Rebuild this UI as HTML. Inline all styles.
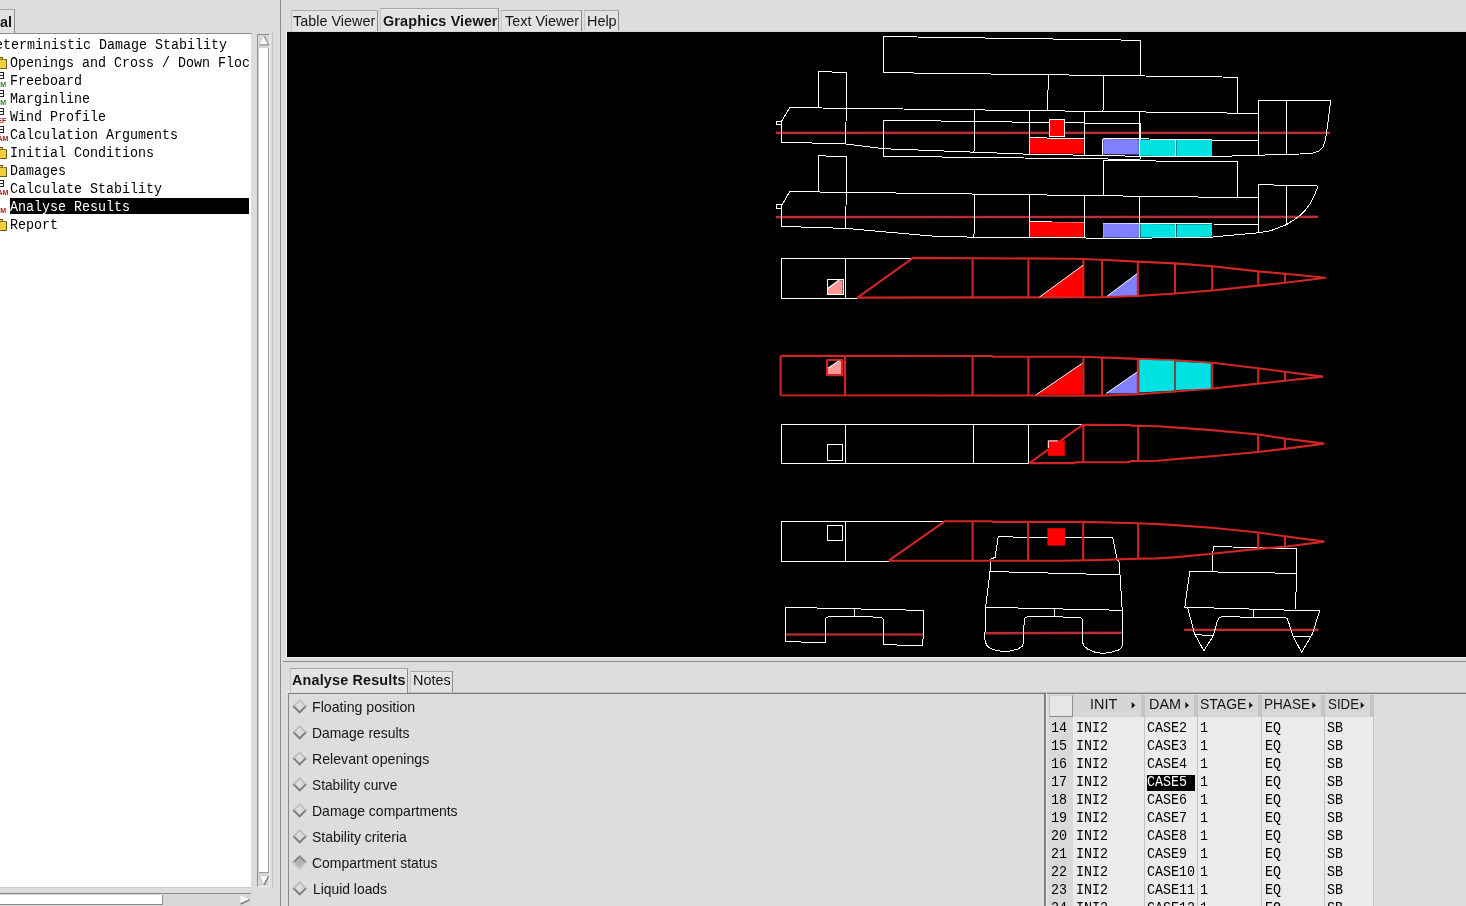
<!DOCTYPE html>
<html><head><meta charset="utf-8"><title>NAPA</title><style>
html,body{margin:0;padding:0;}
body{width:1466px;height:906px;overflow:hidden;background:#dddddd;position:relative;font-family:"Liberation Sans",sans-serif;}
.a{position:absolute;}
.mono{font-family:"Liberation Mono",monospace;font-size:14.5px;white-space:pre;color:#000;position:absolute;height:18px;line-height:18px;transform:scaleX(0.9195);transform-origin:0 0;}
.sans{font-family:"Liberation Sans",sans-serif;font-size:15px;white-space:pre;color:#151515;position:absolute;line-height:16px;height:16px;transform:scaleX(0.96);transform-origin:0 0;}
.b{font-weight:bold;}
.tab{position:absolute;box-sizing:border-box;border:1px solid #8c8c8c;border-bottom:none;border-top-color:#a8a8a8;border-left-color:#c6c6c6;background:#e3e3e3;}
</style></head><body><div id="w" style="position:absolute;left:0;top:0;width:1466px;height:906px;will-change:transform;">
<div class="a" style="left:-20px;top:9.2px;width:35px;height:23.5px;box-sizing:border-box;border:1px solid #8c8c8c;border-bottom:none;border-top-color:#a8a8a8;background:#e3e3e3;"></div>
<div class="sans b" style="left:0.4px;top:13.7px;">al</div>
<div class="a" style="left:0px;top:32.5px;width:252px;height:1.5px;background:#8c8c8c;"></div>
<div class="a" style="left:0px;top:34px;width:251.2px;height:853px;background:#ffffff;"></div>
<div class="a" style="left:0px;top:887.1px;width:251.2px;height:1.1px;background:#cacaca;"></div>
<div class="a" style="left:0;top:0;width:250px;height:906px;overflow:hidden;"><div class="mono" style="left:-13.2px;top:36px;">Deterministic Damage Stability</div></div>
<div class="a" style="left:0;top:0;width:250px;height:906px;overflow:hidden;"><div class="mono" style="left:10px;top:54px;">Openings and Cross / Down Floc</div></div>
<div class="a" style="left:-2px;top:58.5px;width:8.5px;height:10.5px;box-sizing:border-box;background:#f2cf3e;border:1px solid #6b5a10;border-top-color:#8a7a30;"></div>
<div class="a" style="left:-2px;top:57px;width:4.5px;height:2px;background:#e8c030;border-top:1px solid #6b5a10;border-right:1px solid #6b5a10;box-sizing:border-box;"></div>
<div class="a" style="left:0;top:0;width:250px;height:906px;overflow:hidden;"><div class="mono" style="left:10px;top:72px;">Freeboard</div></div>
<div class="a" style="left:-3px;top:72px;width:7px;height:7px;box-sizing:border-box;border:1px solid #222;background:#fff;"></div>
<div class="a" style="left:0px;top:74.5px;width:3px;height:1px;background:#222;"></div>
<div class="a" style="left:0.3px;top:80.7px;font:bold 7px/7px 'Liberation Sans',sans-serif;color:#2f7f33;letter-spacing:0px;">M</div>
<div class="a" style="left:0;top:0;width:250px;height:906px;overflow:hidden;"><div class="mono" style="left:10px;top:90px;">Marginline</div></div>
<div class="a" style="left:-3px;top:90px;width:7px;height:7px;box-sizing:border-box;border:1px solid #222;background:#fff;"></div>
<div class="a" style="left:0px;top:92.5px;width:3px;height:1px;background:#222;"></div>
<div class="a" style="left:0.3px;top:98.7px;font:bold 7px/7px 'Liberation Sans',sans-serif;color:#2f7f33;letter-spacing:0px;">M</div>
<div class="a" style="left:0;top:0;width:250px;height:906px;overflow:hidden;"><div class="mono" style="left:10px;top:108px;">Wind Profile</div></div>
<div class="a" style="left:-3px;top:108px;width:7px;height:7px;box-sizing:border-box;border:1px solid #222;background:#fff;"></div>
<div class="a" style="left:0px;top:110.5px;width:3px;height:1px;background:#222;"></div>
<div class="a" style="left:-2.6px;top:116.7px;font:bold 7px/7px 'Liberation Sans',sans-serif;color:#a82020;letter-spacing:0px;">EF</div>
<div class="a" style="left:0;top:0;width:250px;height:906px;overflow:hidden;"><div class="mono" style="left:10px;top:126px;">Calculation Arguments</div></div>
<div class="a" style="left:-3px;top:126px;width:7px;height:7px;box-sizing:border-box;border:1px solid #222;background:#fff;"></div>
<div class="a" style="left:0px;top:128.5px;width:3px;height:1px;background:#222;"></div>
<div class="a" style="left:-2.6px;top:134.7px;font:bold 7px/7px 'Liberation Sans',sans-serif;color:#a82020;letter-spacing:0px;">AM</div>
<div class="a" style="left:0;top:0;width:250px;height:906px;overflow:hidden;"><div class="mono" style="left:10px;top:144px;">Initial Conditions</div></div>
<div class="a" style="left:-2px;top:148.5px;width:8.5px;height:10.5px;box-sizing:border-box;background:#f2cf3e;border:1px solid #6b5a10;border-top-color:#8a7a30;"></div>
<div class="a" style="left:-2px;top:147px;width:4.5px;height:2px;background:#e8c030;border-top:1px solid #6b5a10;border-right:1px solid #6b5a10;box-sizing:border-box;"></div>
<div class="a" style="left:0;top:0;width:250px;height:906px;overflow:hidden;"><div class="mono" style="left:10px;top:162px;">Damages</div></div>
<div class="a" style="left:-2px;top:166.5px;width:8.5px;height:10.5px;box-sizing:border-box;background:#f2cf3e;border:1px solid #6b5a10;border-top-color:#8a7a30;"></div>
<div class="a" style="left:-2px;top:165px;width:4.5px;height:2px;background:#e8c030;border-top:1px solid #6b5a10;border-right:1px solid #6b5a10;box-sizing:border-box;"></div>
<div class="a" style="left:0;top:0;width:250px;height:906px;overflow:hidden;"><div class="mono" style="left:10px;top:180px;">Calculate Stability</div></div>
<div class="a" style="left:-3px;top:180px;width:7px;height:7px;box-sizing:border-box;border:1px solid #222;background:#fff;"></div>
<div class="a" style="left:0px;top:182.5px;width:3px;height:1px;background:#222;"></div>
<div class="a" style="left:-2.6px;top:188.7px;font:bold 7px/7px 'Liberation Sans',sans-serif;color:#a82020;letter-spacing:0px;">AM</div>
<div class="a" style="left:9.6px;top:198.2px;width:239.6px;height:15.6px;background:#000;"></div>
<div class="a" style="left:0;top:0;width:251px;height:906px;overflow:hidden;"><div class="mono" style="left:10px;top:198px;color:#fff;">Analyse Results</div></div>
<div class="a" style="left:0.3px;top:206.7px;font:bold 7px/7px 'Liberation Sans',sans-serif;color:#a82020;letter-spacing:0px;">M</div>
<div class="a" style="left:0;top:0;width:250px;height:906px;overflow:hidden;"><div class="mono" style="left:10px;top:216px;">Report</div></div>
<div class="a" style="left:-2px;top:220.5px;width:8.5px;height:10.5px;box-sizing:border-box;background:#f2cf3e;border:1px solid #6b5a10;border-top-color:#8a7a30;"></div>
<div class="a" style="left:-2px;top:219px;width:4.5px;height:2px;background:#e8c030;border-top:1px solid #6b5a10;border-right:1px solid #6b5a10;box-sizing:border-box;"></div>
<div class="a" style="left:257px;top:34px;width:13px;height:853px;box-sizing:border-box;background:#d6d6d6;border-left:1px solid #8c8c8c;border-top:1px solid #8c8c8c;border-right:1px solid #f2f2f2;border-bottom:1px solid #f2f2f2;"></div>
<div class="a" style="left:258.5px;top:47.5px;width:10px;height:825.5px;background:#fff;border-right:1px solid #9a9a9a;border-bottom:1px solid #9a9a9a;box-sizing:border-box;"></div>
<svg class="a" style="left:257px;top:34px" width="13" height="853" viewBox="0 0 13 853"><path d="M7.2 2.2 L2.5 10.8 L11.8 10.8 Z" fill="#fff"/><path d="M7.2 2.2 L11.8 10.8 L2.5 10.8" fill="none" stroke="#8a8a8a" stroke-width="1.2"/><path d="M2.6 842.2 L11.6 842.2 L7 851 Z" fill="#fff"/><path d="M11.6 842.2 L7 851" fill="none" stroke="#777" stroke-width="1.4"/><path d="M2.6 842.2 L7 851" fill="none" stroke="#bbb" stroke-width="0.8"/></svg>
<div class="a" style="left:0px;top:892.8px;width:251px;height:13.2px;box-sizing:border-box;background:#d8d8d8;border-top:1.6px solid #8a8a8a;"></div>
<div class="a" style="left:0px;top:894.5px;width:162.5px;height:10.6px;background:#fff;border-right:1px solid #909090;border-bottom:1.2px solid #8a8a8a;box-sizing:border-box;"></div>
<svg class="a" style="left:238px;top:893px" width="13" height="13" viewBox="0 0 13 13"><path d="M2.6 2.6 L11.8 6.6 L2.6 11 Z" fill="#fff"/><path d="M11.8 6.6 L2.6 11" fill="none" stroke="#777" stroke-width="1.4"/></svg>
<div class="a" style="left:279.8px;top:0px;width:1.3px;height:906px;background:#8e8e8e;"></div>
<div class="a" style="left:272.2px;top:32.3px;width:0.8px;height:856px;background:#c4c4c4;"></div>
<div class="tab" style="left:290.5px;top:10px;width:87.5px;height:21.5px;"></div>
<div class="sans" style="left:293.2px;top:12.8px;">Table Viewer</div>
<div class="tab" style="left:380px;top:8px;width:119px;height:24px;"></div>
<div class="sans b" style="left:383.3px;top:12.8px;letter-spacing:0.14px;">Graphics Viewer</div>
<div class="tab" style="left:501.3px;top:10px;width:80.7px;height:21.5px;"></div>
<div class="sans" style="left:504.5px;top:12.8px;">Text Viewer</div>
<div class="tab" style="left:583.6px;top:10px;width:35.4px;height:21.5px;"></div>
<div class="sans" style="left:586.7px;top:12.8px;">Help</div>
<div class="a" style="left:286.4px;top:30.9px;width:1180px;height:626.8px;box-sizing:border-box;border:1px solid #f0f0f0;border-top-color:#d4d4d4;border-right:none;background:#000;"></div>
<div class="a" style="left:287.8px;top:31.8px;width:1178.2px;height:624.1px;background:#000;"></div>
<div class="a" style="left:283px;top:660.8px;width:1183px;height:1.2px;background:#8a8a8a;"></div>
<div class="tab" style="left:290.1px;top:668.2px;width:118px;height:24.8px;"></div>
<div class="sans b" style="left:292.2px;top:672.2px;letter-spacing:0.16px;">Analyse Results</div>
<div class="tab" style="left:410.4px;top:670.6px;width:42.4px;height:22px;"></div>
<div class="sans" style="left:413.2px;top:672.2px;">Notes</div>
<div class="a" style="left:408px;top:691.6px;width:1058px;height:1px;background:#bcbcbc;"></div>
<div class="a" style="left:286.4px;top:691.2px;width:4px;height:1px;background:#f0f0f0;"></div>
<div class="a" style="left:288px;top:692.6px;width:1178px;height:1.5px;background:#7c7c7c;"></div>
<div class="a" style="left:288px;top:693px;width:1px;height:213px;background:#8a8a8a;"></div>
<div class="sans" style="left:311.7px;top:698.5px;transform:scaleX(0.9446);">Floating position</div>
<div class="sans" style="left:311.7px;top:724.5px;transform:scaleX(0.9274);">Damage results</div>
<div class="sans" style="left:311.7px;top:750.5px;transform:scaleX(0.9437);">Relevant openings</div>
<div class="sans" style="left:311.7px;top:776.5px;transform:scaleX(0.9139);">Stability curve</div>
<div class="sans" style="left:311.7px;top:802.5px;transform:scaleX(0.9341);">Damage compartments</div>
<div class="sans" style="left:311.7px;top:828.5px;transform:scaleX(0.9322);">Stability criteria</div>
<div class="sans" style="left:311.7px;top:854.5px;transform:scaleX(0.9283);">Compartment status</div>
<div class="sans" style="left:313.2px;top:880.5px;transform:scaleX(0.9245);">Liquid loads</div>
<svg class="a" style="left:0;top:0" width="1466" height="906" viewBox="0 0 1466 906"><path d="M292.3 706.3 L299.7 698.9 L307.1 706.3 Z" fill="#bebebe"/><path d="M292.3 706.3 L299.7 713.7 L307.1 706.3 Z" fill="#7c7c7c"/><path d="M295 706.3 L299.7 701.6 L304.4 706.3 L299.7 711 Z" fill="#dddddd"/><path d="M292.3 732.3 L299.7 724.9 L307.1 732.3 Z" fill="#bebebe"/><path d="M292.3 732.3 L299.7 739.7 L307.1 732.3 Z" fill="#7c7c7c"/><path d="M295 732.3 L299.7 727.6 L304.4 732.3 L299.7 737 Z" fill="#dddddd"/><path d="M292.3 758.3 L299.7 750.9 L307.1 758.3 Z" fill="#bebebe"/><path d="M292.3 758.3 L299.7 765.7 L307.1 758.3 Z" fill="#7c7c7c"/><path d="M295 758.3 L299.7 753.6 L304.4 758.3 L299.7 763 Z" fill="#dddddd"/><path d="M292.3 784.3 L299.7 776.9 L307.1 784.3 Z" fill="#bebebe"/><path d="M292.3 784.3 L299.7 791.7 L307.1 784.3 Z" fill="#7c7c7c"/><path d="M295 784.3 L299.7 779.6 L304.4 784.3 L299.7 789 Z" fill="#dddddd"/><path d="M292.3 810.3 L299.7 802.9 L307.1 810.3 Z" fill="#bebebe"/><path d="M292.3 810.3 L299.7 817.7 L307.1 810.3 Z" fill="#7c7c7c"/><path d="M295 810.3 L299.7 805.6 L304.4 810.3 L299.7 815 Z" fill="#dddddd"/><path d="M292.3 836.3 L299.7 828.9 L307.1 836.3 Z" fill="#bebebe"/><path d="M292.3 836.3 L299.7 843.7 L307.1 836.3 Z" fill="#7c7c7c"/><path d="M295 836.3 L299.7 831.6 L304.4 836.3 L299.7 841 Z" fill="#dddddd"/><path d="M292.3 862.3 L299.7 854.9 L307.1 862.3 Z" fill="#858585"/><path d="M292.3 862.3 L299.7 869.7 L307.1 862.3 Z" fill="#c0c0c0"/><path d="M295 862.3 L299.7 857.6 L304.4 862.3 L299.7 867 Z" fill="#b4b4b4"/><path d="M292.3 888.3 L299.7 880.9 L307.1 888.3 Z" fill="#bebebe"/><path d="M292.3 888.3 L299.7 895.7 L307.1 888.3 Z" fill="#7c7c7c"/><path d="M295 888.3 L299.7 883.6 L304.4 888.3 L299.7 893 Z" fill="#dddddd"/></svg>
<div class="a" style="left:1044.2px;top:693px;width:1.7px;height:213px;background:#808080;"></div>
<div class="a" style="left:1045.9px;top:693px;width:0.8px;height:213px;background:#ececec;"></div>
<div class="a" style="left:1049px;top:716.5px;width:324.5px;height:190px;background:#ebebeb;"></div>
<div class="a" style="left:1049px;top:716.5px;width:23.5px;height:190px;background:#d9d9d9;"></div>
<div class="a" style="left:1144.3px;top:716.5px;width:1px;height:190px;background:#c4c4c4;"></div>
<div class="a" style="left:1197.3px;top:716.5px;width:1px;height:190px;background:#c4c4c4;"></div>
<div class="a" style="left:1261.2px;top:716.5px;width:1px;height:190px;background:#c4c4c4;"></div>
<div class="a" style="left:1324px;top:716.5px;width:1px;height:190px;background:#c4c4c4;"></div>
<div class="a" style="left:1373px;top:716.5px;width:1px;height:190px;background:#c4c4c4;"></div>
<div class="a" style="left:1049px;top:695.2px;width:324.6px;height:21.5px;background:#c4c4c4;"></div>
<div class="a" style="left:1049.2px;top:695.3px;width:23.4px;height:21.4px;box-sizing:border-box;background:#e6e6e6;border-right:1px solid #8c8c8c;border-bottom:1px solid #8c8c8c;border-top:1px solid #d0d0d0;border-left:1px solid #c0c0c0;"></div>
<div class="a" style="left:1072.6px;top:695.2px;width:68.4px;height:21.4px;background:#d6d6d6;border-bottom:1px solid #d2d2d2;box-sizing:border-box;"></div>
<div class="sans" style="left:1090.3px;top:696.2px;transform:scaleX(0.9600);">INIT</div>
<div class="a" style="left:1144.6px;top:695.2px;width:49.7px;height:21.4px;background:#d6d6d6;border-bottom:1px solid #d2d2d2;box-sizing:border-box;"></div>
<div class="sans" style="left:1149.3px;top:696.2px;transform:scaleX(0.9600);">DAM</div>
<div class="a" style="left:1197.6px;top:695.2px;width:60.7px;height:21.4px;background:#d6d6d6;border-bottom:1px solid #d2d2d2;box-sizing:border-box;"></div>
<div class="sans" style="left:1200.3px;top:696.2px;transform:scaleX(0.9312);">STAGE</div>
<div class="a" style="left:1261.7px;top:695.2px;width:59.6px;height:21.4px;background:#d6d6d6;border-bottom:1px solid #d2d2d2;box-sizing:border-box;"></div>
<div class="sans" style="left:1264.4px;top:696.2px;transform:scaleX(0.9053);">PHASE</div>
<div class="a" style="left:1324.5px;top:695.2px;width:45.7px;height:21.4px;background:#d6d6d6;border-bottom:1px solid #d2d2d2;box-sizing:border-box;"></div>
<div class="sans" style="left:1327.6px;top:696.2px;transform:scaleX(0.8899);">SIDE</div>
<svg class="a" style="left:0;top:0" width="1466" height="906" viewBox="0 0 1466 906"><path d="M1131.7 701.9 L1135.3 705.2 L1131.7 708.5 Z" fill="#111"/><path d="M1185.4 701.9 L1189 705.2 L1185.4 708.5 Z" fill="#111"/><path d="M1249.2 701.9 L1252.8 705.2 L1249.2 708.5 Z" fill="#111"/><path d="M1312.4 701.9 L1316 705.2 L1312.4 708.5 Z" fill="#111"/><path d="M1360.7 701.9 L1364.3 705.2 L1360.7 708.5 Z" fill="#111"/></svg>
<div class="a" style="left:1040px;top:716.5px;width:400px;height:189.5px;overflow:hidden;">
<div class="mono" style="left:11.3px;top:2.5px;color:#000;">14</div>
<div class="mono" style="left:35.8px;top:2.5px;color:#000;">INI2</div>
<div class="mono" style="left:107px;top:2.5px;color:#000;">CASE2</div>
<div class="mono" style="left:159.8px;top:2.5px;color:#000;">1</div>
<div class="mono" style="left:224.6px;top:2.5px;color:#000;">EQ</div>
<div class="mono" style="left:286.8px;top:2.5px;color:#000;">SB</div>
<div class="mono" style="left:11.3px;top:20.5px;color:#000;">15</div>
<div class="mono" style="left:35.8px;top:20.5px;color:#000;">INI2</div>
<div class="mono" style="left:107px;top:20.5px;color:#000;">CASE3</div>
<div class="mono" style="left:159.8px;top:20.5px;color:#000;">1</div>
<div class="mono" style="left:224.6px;top:20.5px;color:#000;">EQ</div>
<div class="mono" style="left:286.8px;top:20.5px;color:#000;">SB</div>
<div class="mono" style="left:11.3px;top:38.5px;color:#000;">16</div>
<div class="mono" style="left:35.8px;top:38.5px;color:#000;">INI2</div>
<div class="mono" style="left:107px;top:38.5px;color:#000;">CASE4</div>
<div class="mono" style="left:159.8px;top:38.5px;color:#000;">1</div>
<div class="mono" style="left:224.6px;top:38.5px;color:#000;">EQ</div>
<div class="mono" style="left:286.8px;top:38.5px;color:#000;">SB</div>
<div class="mono" style="left:11.3px;top:56.5px;color:#000;">17</div>
<div class="mono" style="left:35.8px;top:56.5px;color:#000;">INI2</div>
<div class="a" style="left:107.2px;top:58.5px;width:48px;height:15.6px;background:#000;"></div>
<div class="mono" style="left:107px;top:56.5px;color:#fff;">CASE5</div>
<div class="mono" style="left:159.8px;top:56.5px;color:#000;">1</div>
<div class="mono" style="left:224.6px;top:56.5px;color:#000;">EQ</div>
<div class="mono" style="left:286.8px;top:56.5px;color:#000;">SB</div>
<div class="mono" style="left:11.3px;top:74.5px;color:#000;">18</div>
<div class="mono" style="left:35.8px;top:74.5px;color:#000;">INI2</div>
<div class="mono" style="left:107px;top:74.5px;color:#000;">CASE6</div>
<div class="mono" style="left:159.8px;top:74.5px;color:#000;">1</div>
<div class="mono" style="left:224.6px;top:74.5px;color:#000;">EQ</div>
<div class="mono" style="left:286.8px;top:74.5px;color:#000;">SB</div>
<div class="mono" style="left:11.3px;top:92.5px;color:#000;">19</div>
<div class="mono" style="left:35.8px;top:92.5px;color:#000;">INI2</div>
<div class="mono" style="left:107px;top:92.5px;color:#000;">CASE7</div>
<div class="mono" style="left:159.8px;top:92.5px;color:#000;">1</div>
<div class="mono" style="left:224.6px;top:92.5px;color:#000;">EQ</div>
<div class="mono" style="left:286.8px;top:92.5px;color:#000;">SB</div>
<div class="mono" style="left:11.3px;top:110.5px;color:#000;">20</div>
<div class="mono" style="left:35.8px;top:110.5px;color:#000;">INI2</div>
<div class="mono" style="left:107px;top:110.5px;color:#000;">CASE8</div>
<div class="mono" style="left:159.8px;top:110.5px;color:#000;">1</div>
<div class="mono" style="left:224.6px;top:110.5px;color:#000;">EQ</div>
<div class="mono" style="left:286.8px;top:110.5px;color:#000;">SB</div>
<div class="mono" style="left:11.3px;top:128.5px;color:#000;">21</div>
<div class="mono" style="left:35.8px;top:128.5px;color:#000;">INI2</div>
<div class="mono" style="left:107px;top:128.5px;color:#000;">CASE9</div>
<div class="mono" style="left:159.8px;top:128.5px;color:#000;">1</div>
<div class="mono" style="left:224.6px;top:128.5px;color:#000;">EQ</div>
<div class="mono" style="left:286.8px;top:128.5px;color:#000;">SB</div>
<div class="mono" style="left:11.3px;top:146.5px;color:#000;">22</div>
<div class="mono" style="left:35.8px;top:146.5px;color:#000;">INI2</div>
<div class="mono" style="left:107px;top:146.5px;color:#000;">CASE10</div>
<div class="mono" style="left:159.8px;top:146.5px;color:#000;">1</div>
<div class="mono" style="left:224.6px;top:146.5px;color:#000;">EQ</div>
<div class="mono" style="left:286.8px;top:146.5px;color:#000;">SB</div>
<div class="mono" style="left:11.3px;top:164.5px;color:#000;">23</div>
<div class="mono" style="left:35.8px;top:164.5px;color:#000;">INI2</div>
<div class="mono" style="left:107px;top:164.5px;color:#000;">CASE11</div>
<div class="mono" style="left:159.8px;top:164.5px;color:#000;">1</div>
<div class="mono" style="left:224.6px;top:164.5px;color:#000;">EQ</div>
<div class="mono" style="left:286.8px;top:164.5px;color:#000;">SB</div>
<div class="mono" style="left:11.3px;top:182.5px;color:#000;">24</div>
<div class="mono" style="left:35.8px;top:182.5px;color:#000;">INI2</div>
<div class="mono" style="left:107px;top:182.5px;color:#000;">CASE12</div>
<div class="mono" style="left:159.8px;top:182.5px;color:#000;">1</div>
<div class="mono" style="left:224.6px;top:182.5px;color:#000;">EQ</div>
<div class="mono" style="left:286.8px;top:182.5px;color:#000;">SB</div>
</div>
<svg class="a" style="left:0;top:0" width="1466" height="906" viewBox="0 0 1466 906"><path d="M776 132.95 L1330 132.85 M776 217.05 L1318 216.95 M784.7 634.5 L923 634.5 M984.2 633.2 L1121.8 632.8 M1184.2 629.9 L1318.6 629.9" fill="none" stroke="#2e0909" stroke-width="3.4"/><path d="M776 132.95 L1330 132.85 M776 217.05 L1318 216.95 M784.7 634.5 L923 634.5 M984.2 633.2 L1121.8 632.8 M1184.2 629.9 L1318.6 629.9" fill="none" stroke="#b83036" stroke-width="2.2"/><path d="M883 72.6 L883 36.5 L1140.7 40.3 L1140 75.8 M883 72.6 L1237.6 77.2 L1237.6 112.8 M1048.3 74.8 L1047.6 110.6 M1103.6 75.5 L1103 111.4 M818.5 107.7 L818.5 71.5 L846.7 72.6 L845.7 144 M1258.4 113.4 L789.8 107.6 L781.9 120.6 L781.5 142.1 L845.7 144 L883.2 148.7 L1027.8 154.2 L1084 155.2 L1140 156.3 L1212 156.6 L1258.4 155.2 L1300 154 L1312 153.2 L1319 151.3 L1323 147 L1325.6 139.1 L1328 122 L1330.6 101 L1258.4 100.5 L1258.4 155.2 M776.1 121.5 L781.5 121.5 L781.5 124.9 L776.1 124.9 Z M1286.3 100.7 L1286.3 154.4 M883.2 120.2 L1140.7 123.8 L1140 159.4 L883.2 156.3 Z M974.2 109.6 L974 153.2 M1029.6 110.3 L1029.3 154.3 M1084.6 111 L1084.3 155.2 M1139.8 111.7 L1139.5 156.3 M1212 140.2 L1258.4 140.6 M818.5 191.8 L818.5 155.8 L846.7 156.6 L845.7 228.4 M1258.4 197.8 L789.8 191.6 L781.9 205.1 L781.5 226.4 L845.7 228.4 L933.7 236.2 L974.6 237.2 L1029.5 237.8 L1139 238.2 L1212 237.1 L1223 236 L1258 232.8 L1271 230.6 L1286.4 224.6 L1294.1 219.9 L1299.5 215.8 L1305.5 209.8 L1310.3 203.3 L1314.5 195 L1318 186.3 L1316.5 185.8 L1258.4 184.7 L1258.4 232.8 M776.1 204.5 L781.5 204.5 L781.5 208.5 L776.1 208.5 Z M1103.3 195.6 L1103.8 160.5 L1237.6 161.8 L1237.4 197.4 M1286.3 185 L1286 226 M974.2 193.8 L974 237 M1029.6 194.6 L1029.3 237.8 M1084.6 195.3 L1084.3 238 M1139.8 196 L1139.5 238.2 M1212 224 L1258.4 224.3 M1029.8 221.8 L1083.7 222.3 M1103.2 223.3 L1212 224 M1103.2 223.3 L1103.2 237.7 M1175.9 224 L1175.9 237.6 M913.2 258.7 L781.3 258.7 L781.3 298.6 L857 298.6 M845.7 258.7 L845.7 298.6 M781.3 424.4 L1082.7 424.4 M781.3 463.6 L1028.6 463.6 M781.3 424.4 L781.3 463.6 M845.7 424.4 L845.7 463.6 M973.2 424.4 L973.2 463.6 M1028.4 424.4 L1028.4 463.6 M827.3 444.4 L842.8 444.4 L842.8 460.1 L827.3 460.1 Z M945 521.4 L781.3 521.4 L781.3 561.3 L888.7 561.3 M845.7 521.4 L845.7 561.3 M827.3 525.5 L842.8 525.5 L842.8 540.5 L827.3 540.5 Z M785.3 607.3 L923.5 610.4 L922.9 645.8 L883.6 644.6 L883.6 621.6 L882.8 618.6 L880.5 617.1 L829.3 616.5 L826.5 617.4 L825.2 619.6 L825.2 642.5 L785.3 641.7 Z M854.3 609 L854.3 616.6 M998.2 536.9 L1112.8 537.7 L1117.1 559.6 L1119.3 562.2 L1120 574.9 L1122.2 609.8 L1122.6 644.7 L1121 648 L1118.2 650.2 L1111 652.3 L1103 653.4 L1095 652.2 L1087.7 649.1 L1084 646 L1082.6 642.5 L1082.6 620.7 L1081.5 618.2 L1078.9 617.2 L1027.8 616.6 L1025.2 617.6 L1024.1 619.8 L1023.7 643 L1022 646.5 L1018 649 L1010 651 L1003.3 651.5 L996 650.3 L990 648.2 L986.5 645 L984.9 640 L985.2 620 L985.9 605.3 L990 571.5 L991 559.2 L995.1 557.2 L998.2 536.9 M990 571.5 L1120 574.9 M985.9 607.3 L1122.2 610.3 M1054.4 609 L1054.4 616.8 M1212.1 572 L1213.2 546.5 L1296.8 548.7 L1295.7 609.5 M1189.8 571.5 L1296.4 573.4 M1189.8 571.5 L1184.8 607.2 L1319.5 611 L1312.5 633.8 L1301.6 652.3 L1292.9 636 L1288.5 621.8 L1287.2 618.8 L1285.2 617.5 L1221.9 616.8 L1219 618 L1217.5 620.7 L1213.2 636 L1203.8 650.8 L1194.6 633.8 L1187.6 607.6 M1195.7 634.4 L1213.2 636 M1292.9 636.6 L1311.4 636.6 M1253.6 609.4 L1253.6 617.1" fill="none" stroke="#fff" stroke-width="1" shape-rendering="crispEdges"/><g><path d="M1049.6 119.8 L1064.3 119.8 L1064.3 136 L1049.6 136 Z" fill="#ff0000"/><path d="M1029.8 137.9 L1083.8 138.9 L1083.8 153.8 L1029.8 153.5 Z" fill="#ff0000"/><path d="M1103.2 139 L1138.8 139.3 L1138.8 154.6 L1103.2 154.3 Z" fill="#8080ff"/><path d="M1139.9 139.4 L1175.2 139.7 L1175.2 156 L1139.9 155.8 Z" fill="#00e1e1"/><path d="M1176.4 139.7 L1212 140 L1212 156.2 L1176.4 156 Z" fill="#00e1e1"/><path d="M1029.8 222 L1083.7 222.4 L1083.7 237 L1029.8 236.8 Z" fill="#ff0000"/><path d="M1103.2 223.4 L1139.3 223.8 L1139.3 237.8 L1103.2 237.6 Z" fill="#8080ff"/><path d="M1140.4 224 L1175.2 224.2 L1175.2 237.4 L1140.4 237.6 Z" fill="#00e1e1"/><path d="M1176.6 224.2 L1212 224.3 L1212 236.8 L1176.6 237.2 Z" fill="#00e1e1"/><path d="M1039.6 297 L1083 265.3 L1083 297 Z" fill="#ff0000"/><path d="M1107.3 296 L1137.2 273.6 L1137.2 296 Z" fill="#8080ff"/><path d="M828 288.4 L839 280.2 L842.6 280.2 L842.6 294.6 L828 294.6 Z" fill="#ff9696"/><path d="M1036.4 394.6 L1082.5 363.2 L1082.5 394.6 Z" fill="#ff0000"/><path d="M1106.2 393.4 L1137.2 372 L1137.2 393.4 Z" fill="#8080ff"/><path d="M828 368.4 L839 360.8 L841.5 360.8 L841.5 374.4 L828 374.4 Z" fill="#ff9696"/></g><path d="M1049.3 136.3 L1049.3 119.6 L1064.6 119.7 L1064.6 136.3 L1049.3 136.3 M1029.3 137.7 L1084.4 138.7 M1102.8 138.5 L1212 139.7 M1102.8 138.5 L1102.8 155 M1175.8 139.6 L1175.8 156.3 M827.3 279.4 L843.2 279.4 L843.2 294.9 L827.3 294.9 Z" fill="none" stroke="#fff" stroke-width="1" shape-rendering="crispEdges"/><path d="M857 297.8 L913.2 257.9 L1074.6 258.7 L1102.1 259.8 L1137.5 261.6 L1175 263.4 L1212.1 266.2 L1258.3 271.4 L1285.2 273.8 L1325.8 277.8 M857 297.6 L1102.1 297.2 L1137.5 296 L1175 293.5 L1212.1 290.5 L1258.3 285.6 L1285.2 282.7 L1325.8 277.8 M972.6 258.194 L972.6 297.411 M1028.4 258.471 L1028.4 297.32 M1083.4 259.052 L1083.4 297.231 M1102 259.796 L1102 297.2 M1137.8 261.614 L1137.8 295.98 M1175 263.4 L1175 293.5 M1212.2 266.211 L1212.2 290.489 M1258.3 271.4 L1258.3 285.6 M1285 273.782 L1285 282.722 M780.6 355.9 L992 356 L993 356.7 L1083 356.7 L1137.9 358.9 L1175 360.3 L1212.5 362.8 L1258.2 368.2 L1284.8 371.7 L1323.2 376.6 M780.6 395.3 L1102 395.6 L1137.9 394.3 L1175 391.5 L1212.5 388.5 L1258.2 383.6 L1284.8 380.8 L1323.2 376.6 M780.6 355.9 L780.6 395.3 M845.1 355.931 L845.1 395.36 M972.6 355.991 L972.6 395.479 M1028.4 356.7 L1028.4 395.531 M1083.4 356.716 L1083.4 395.583 M1102 357.461 L1102 395.6 M1137.8 358.896 L1137.8 394.304 M1175 360.3 L1175 391.5 M1212.2 362.78 L1212.2 388.524 M1258.3 368.213 L1258.3 383.589 M1285 371.726 L1285 380.778 M827 360 L842.4 360 L842.4 375.2 L827 375.2 Z M1029.4 463.1 L1082.7 424.9 L1130 425 L1132.2 425.8 L1138.2 425.8 L1157.3 426.2 L1184.6 428.1 L1211.9 430.1 L1258.2 434.5 L1284.8 438.5 L1324.4 443.6 M1029.4 463.1 L1074.4 463.1 L1075.5 462.3 L1129 462.1 L1131.1 461 L1157.3 460.7 L1184.6 458.4 L1211.9 456.3 L1258.2 452 L1284.8 448.9 L1324.4 443.6 M1083.3 424.901 L1083.3 462.271 M1138.2 425.8 L1138.2 460.919 M1258.2 434.5 L1258.2 452 M1284.8 438.5 L1284.8 448.9 M888.7 560.6 L945 521.2 L992 521.2 L993 521.9 L1083.3 521.9 L1138.2 523.3 L1164.1 524.4 L1211.9 527.7 L1258.2 532.5 L1284.8 536.3 L1324.4 541.6 M888.7 560.6 L1064 560.8 L1100 560 L1138.2 558.6 L1157.3 558.4 L1176.4 557.1 L1211.9 553.7 L1258.2 548.9 L1284.8 546.7 L1324.4 541.6 M972.6 521.2 L972.6 560.696 M1028.1 521.9 L1028.1 560.759 M1083.2 521.9 L1083.2 560.373 M1138.2 523.3 L1138.2 558.6 M1258.2 532.5 L1258.2 548.9 M1284.9 536.313 L1284.9 546.687" fill="none" stroke="#d22626" stroke-width="2.1" stroke-linejoin="round"/><path d="M1039.6 297 L1083 265.3" stroke="#fff" stroke-width="1" fill="none"/><path d="M1107.3 296 L1137.2 273.6" stroke="#fff" stroke-width="1" fill="none"/><path d="M828 288.2 L839.2 280" stroke="#fff" stroke-width="1.1" fill="none"/><path d="M1036.4 394.6 L1082.5 363.2" stroke="#fff" stroke-width="1" fill="none"/><path d="M1106.2 393.4 L1137.2 372" stroke="#fff" stroke-width="1" fill="none"/><path d="M1174.9 360.8 L1174.9 391" stroke="#6e4c4c" stroke-width="2" fill="none"/><path d="M1139.2 359.7 L1174 360.8 L1174 390.5 L1139.2 392.4 Z" fill="#00e1e1"/><path d="M1176 361.6 L1210.8 363.5 L1210.8 388.5 L1176 390 Z" fill="#00e1e1"/><path d="M828 368.2 L839.2 360.6" stroke="#fff" stroke-width="1.1" fill="none"/><rect x="1048" y="440.6" width="16.8" height="15.2" fill="#ff0000"/><path d="M1048.3 448 L1048.3 440.9 L1058 440.9" stroke="#fff" stroke-width="1" fill="none"/><rect x="1047.4" y="528.2" width="17.6" height="17.4" fill="#ff0000"/></svg>
</div></body></html>
